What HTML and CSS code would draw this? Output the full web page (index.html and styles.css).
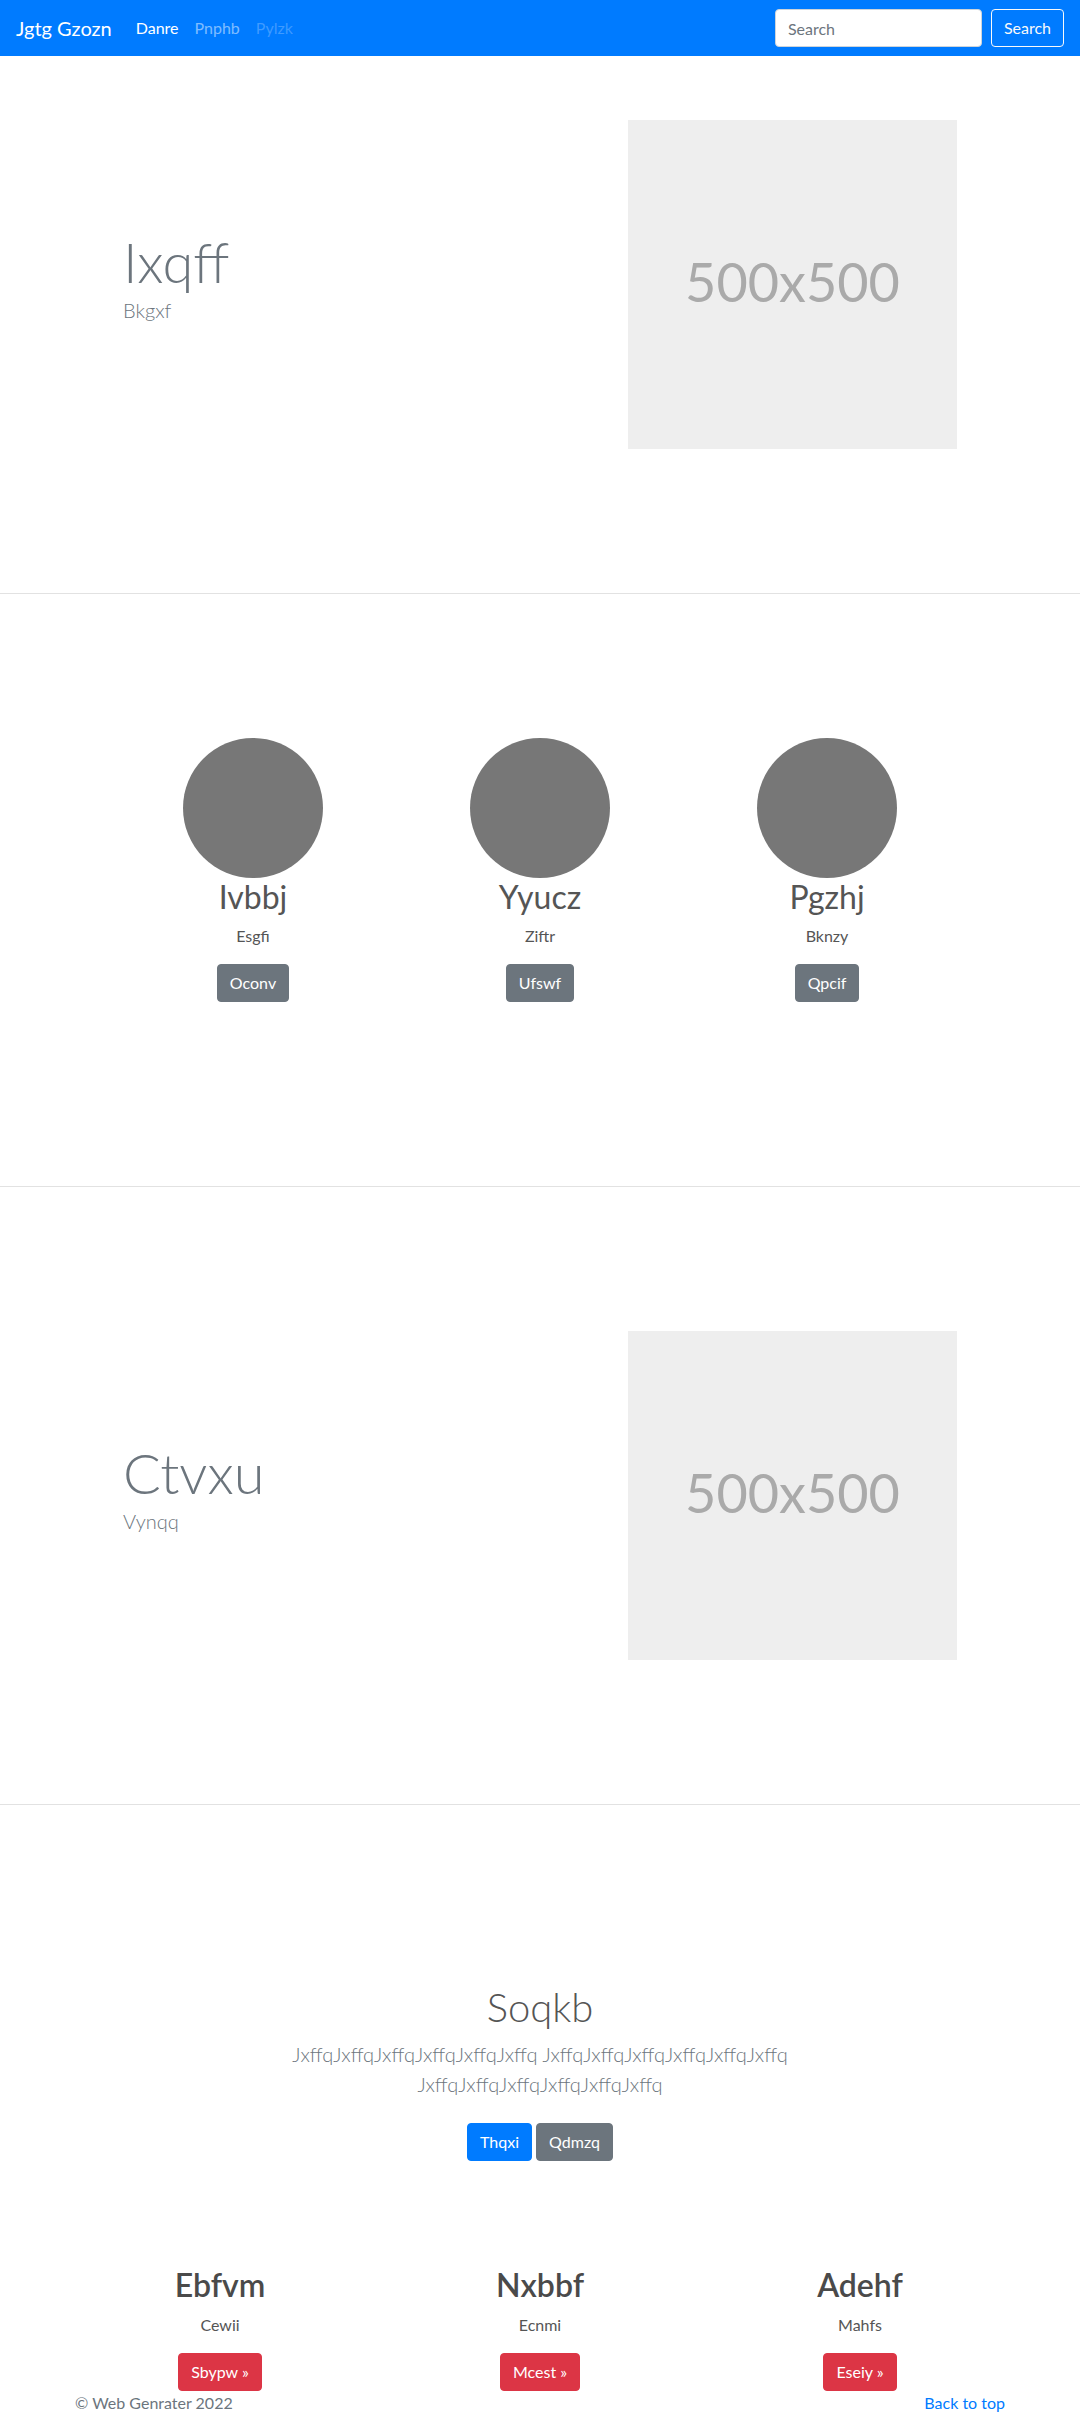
FILE: index.html
```html
<!DOCTYPE html>
<html lang="en">
<head>
<meta charset="utf-8">
<title>Jgtg Gzozn</title>
<link rel="stylesheet" href="styles.css">
</head>
<body>
<nav class="navbar">
  <a class="brand" href="#">Jgtg Gzozn</a>
  <ul class="nav-links">
    <li><a class="nav-link active" href="#">Danre</a></li>
    <li><a class="nav-link" href="#">Pnphb</a></li>
    <li><a class="nav-link disabled" href="#">Pylzk</a></li>
  </ul>
  <form class="search-form">
    <input class="search-input" type="search" placeholder="Search">
    <button class="btn btn-outline-light" type="button">Search</button>
  </form>
</nav>

<section class="feature">
  <div class="feature-row">
    <div class="feature-text">
      <h1 class="display">Ixqff</h1>
      <p class="lead">Bkgxf</p>
    </div>
    <div class="feature-media">
      <div class="placeholder">500x500</div>
    </div>
  </div>
</section>

<section class="marketing">
  <div class="marketing-row">
    <div class="marketing-col">
      <div class="circle"></div>
      <h2 class="marketing-title">Ivbbj</h2>
      <p class="marketing-text">Esgfi</p>
      <p class="btn-line"><a class="btn btn-secondary" href="#">Oconv</a></p>
    </div>
    <div class="marketing-col">
      <div class="circle"></div>
      <h2 class="marketing-title">Yyucz</h2>
      <p class="marketing-text">Ziftr</p>
      <p class="btn-line"><a class="btn btn-secondary" href="#">Ufswf</a></p>
    </div>
    <div class="marketing-col">
      <div class="circle"></div>
      <h2 class="marketing-title">Pgzhj</h2>
      <p class="marketing-text">Bknzy</p>
      <p class="btn-line"><a class="btn btn-secondary" href="#">Qpcif</a></p>
    </div>
  </div>
</section>

<section class="feature">
  <div class="feature-row">
    <div class="feature-text">
      <h1 class="display">Ctvxu</h1>
      <p class="lead">Vynqq</p>
    </div>
    <div class="feature-media">
      <div class="placeholder">500x500</div>
    </div>
  </div>
</section>

<section class="jumbotron">
  <h1 class="jumbotron-heading">Soqkb</h1>
  <p class="jumbotron-lead">JxffqJxffqJxffqJxffqJxffqJxffq JxffqJxffqJxffqJxffqJxffqJxffq JxffqJxffqJxffqJxffqJxffqJxffq</p>
  <p class="jumbotron-actions">
    <a class="btn btn-primary" href="#">Thqxi</a>
    <a class="btn btn-secondary" href="#">Qdmzq</a>
  </p>
</section>

<section class="cards">
  <div class="card-col">
    <h2 class="card-title">Ebfvm</h2>
    <p class="card-text">Cewii</p>
    <p class="btn-line-flush"><a class="btn btn-danger" href="#">Sbypw »</a></p>
  </div>
  <div class="card-col">
    <h2 class="card-title">Nxbbf</h2>
    <p class="card-text">Ecnmi</p>
    <p class="btn-line-flush"><a class="btn btn-danger" href="#">Mcest »</a></p>
  </div>
  <div class="card-col">
    <h2 class="card-title">Adehf</h2>
    <p class="card-text">Mahfs</p>
    <p class="btn-line-flush"><a class="btn btn-danger" href="#">Eseiy »</a></p>
  </div>
</section>

<footer class="footer">
  <p class="copyright">© Web Genrater 2022</p>
  <a class="back-top" href="#">Back to top</a>
</footer>
</body>
</html>
```
FILE: styles.css
```css
* { box-sizing: border-box; }

html, body {
  margin: 0;
  padding: 0;
}

body {
  font-family: "Lato", "Open Sans", "Noto Sans", sans-serif;
  font-size: 16px;
  line-height: 1.5;
  color: #212529;
  background: #fff;
}

a { text-decoration: none; }

h1, h2, p { margin: 0; }

/* ---------- navbar ---------- */
.navbar {
  height: 56px;
  background: #007bff;
  display: flex;
  align-items: center;
  padding: 0 16px;
}

.brand {
  color: #fff;
  font-size: 20px;
  line-height: 30px;
  margin-right: 16px;
}

.nav-links {
  list-style: none;
  margin: 0;
  padding: 0;
  display: flex;
  flex: 1;
}

.nav-link {
  display: block;
  padding: 8px 8px;
  color: rgba(255, 255, 255, 0.5);
  font-size: 16px;
}

.nav-link.active { color: #fff; }
.nav-link.disabled { color: rgba(255, 255, 255, 0.25); }

.search-form {
  display: flex;
  align-items: center;
  gap: 9px;
}

.search-input {
  width: 207px;
  height: 38px;
  padding: 6px 12px;
  font-family: inherit;
  font-size: 16px;
  color: #495057;
  background: #fff;
  border: 1px solid #ced4da;
  border-radius: 4px;
}

.search-input::placeholder { color: #6c757d; }

/* ---------- buttons ---------- */
.btn {
  display: inline-block;
  font-family: inherit;
  font-size: 16px;
  line-height: 24px;
  padding: 6px 12px;
  border: 1px solid transparent;
  border-radius: 4px;
  color: #fff;
  cursor: pointer;
}

.btn-outline-light {
  background: transparent;
  border-color: #f8f9fa;
  color: #f8f9fa;
}

.btn-secondary { background: #6c757d; border-color: #6c757d; }
.btn-primary { background: #007bff; border-color: #007bff; }
.btn-danger { background: #dc3545; border-color: #dc3545; }

/* ---------- feature sections ---------- */
.feature {
  padding: 64px 0 144px;
  border-bottom: 1px solid #e2e2e2;
}

.feature + .marketing + .feature { padding-top: 144px; }

.feature-row {
  width: 960px;
  margin: 0 auto;
  display: flex;
  align-items: center;
}

.feature-text {
  flex: 1;
  padding: 0 63px;
  margin-top: -16px;
}

.feature-media {
  flex: 1;
  display: flex;
  justify-content: flex-end;
  padding: 0 63px;
}

.display {
  font-size: 56px;
  font-weight: 300;
  line-height: 1.2;
  color: #6c757d;
  margin-bottom: 0;
}

.lead {
  font-size: 20px;
  font-weight: 300;
  line-height: 1.5;
  color: #6c757d;
}

.placeholder {
  width: 329px;
  height: 329px;
  background: #eeeeee;
  color: #aaaaaa;
  font-size: 54px;
  display: flex;
  align-items: center;
  justify-content: center;
  padding-bottom: 6px;
}

/* ---------- marketing ---------- */
.marketing {
  padding: 144px 0 168px;
  border-bottom: 1px solid #e2e2e2;
}

.marketing-row {
  width: 861px;
  margin: 0 auto;
  display: grid;
  grid-template-columns: repeat(3, 1fr);
}

.marketing-col {
  display: flex;
  flex-direction: column;
  align-items: center;
  text-align: center;
}

.circle {
  width: 140px;
  height: 140px;
  border-radius: 50%;
  background: #777;
}

.marketing-title {
  font-size: 32px;
  font-weight: 400;
  line-height: 1.2;
  color: #555;
  margin-bottom: 8px;
}

.marketing-text {
  color: #555;
  margin-bottom: 16px;
  font-size: 16px;
}

.btn-line { margin-bottom: 16px; }

/* ---------- jumbotron ---------- */
.jumbotron {
  padding: 178px 0 97px;
  text-align: center;
}

.jumbotron-heading {
  font-size: 40px;
  font-weight: 300;
  line-height: 1.2;
  color: #555;
  margin-bottom: 8px;
}

.jumbotron-lead {
  max-width: 600px;
  margin: 0 auto 16px;
  font-size: 20px;
  font-weight: 300;
  line-height: 1.5;
  color: #6c757d;
}

.jumbotron-actions .btn { margin: 8px 0; }

/* ---------- cards ---------- */
.cards {
  width: 960px;
  margin: 0 auto;
  display: grid;
  grid-template-columns: repeat(3, 1fr);
  text-align: center;
}

.card-title {
  font-size: 32px;
  font-weight: 600;
  line-height: 1.2;
  color: #4a4a4a;
  margin-bottom: 8px;
}

.card-text {
  color: #555;
  margin-bottom: 16px;
  font-size: 16px;
}

/* ---------- footer ---------- */
.footer {
  width: 960px;
  margin: 0 auto;
  padding: 0 15px;
  display: flex;
  justify-content: space-between;
  line-height: 24px;
}

.copyright { color: #6c757d; }
.back-top { color: #007bff; }
```
